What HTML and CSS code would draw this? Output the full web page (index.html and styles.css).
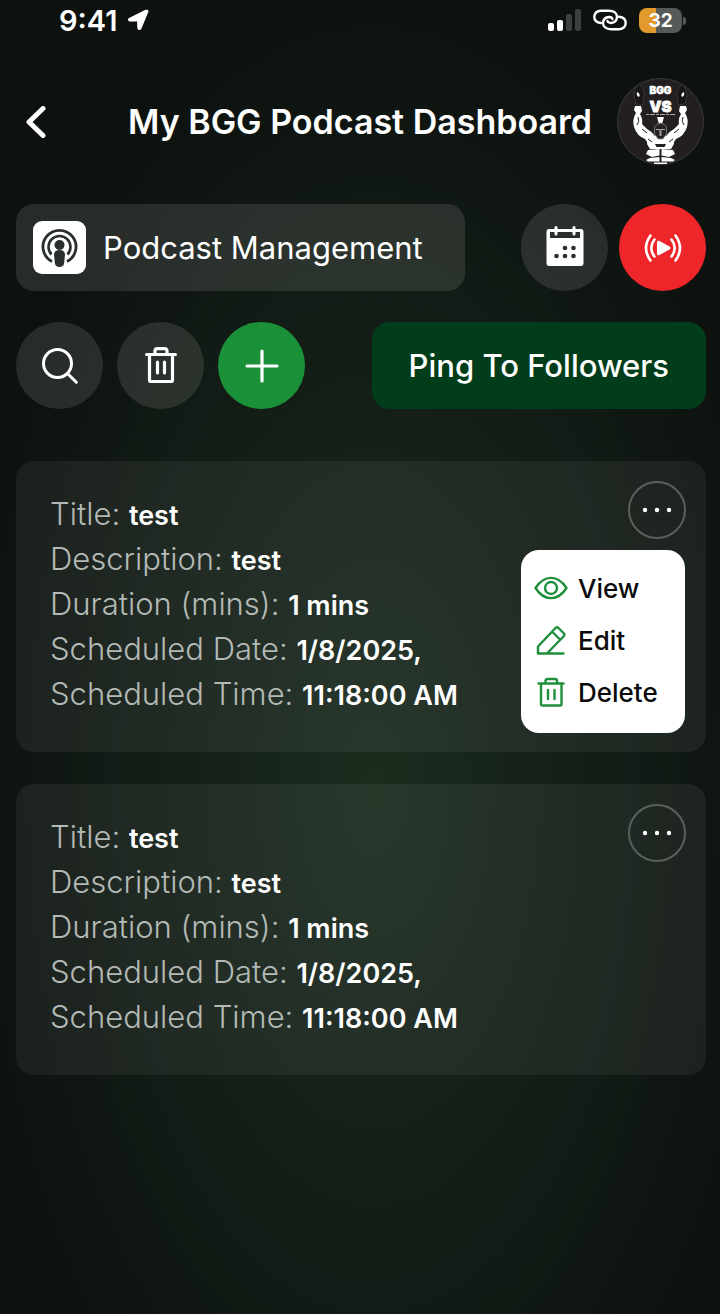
FILE: index.html
```html
<!DOCTYPE html>
<html lang="en">
<head>
  <meta charset="UTF-8">
  <meta name="viewport" content="width=device-width, initial-scale=1.0">
  <title>My BGG Podcast Dashboard</title>
  <link rel="stylesheet" href="styles.css">
</head>
<body>
  <div class="status-bar">
    <div class="status-left">
      <span class="time">9:41</span>
      <svg width="22" height="22" viewBox="0 0 22 22"><path d="M2 9 18.500.8Q22 0 21.300 3L14.500 19.500Q13 22 11 20.500Q10 19.500 10.200 12.500H2.500Q-.5 11 2 9Z" fill="#fff"/></svg>
    </div>
    <div class="status-right">
      <svg width="33" height="22" viewBox="0 0 33 22">
        <rect x="0" y="14" width="6" height="8" rx="2" fill="#fff"/>
        <rect x="9" y="11" width="6" height="11" rx="2" fill="#fff"/>
        <rect x="18" y="5" width="6" height="17" rx="2" fill="#3d413e"/>
        <rect x="27" y="0" width="6" height="22" rx="2" fill="#3d413e"/>
      </svg>
      <svg width="34" height="22" viewBox="0 0 34 22" fill="none" stroke="#fff" stroke-width="2.400" stroke-linecap="round">
        <path d="M8 14C3.500 13.500 1.300 11 1.300 8Q1.500 2 8 1.700H16C21 1.700 24 4.500 24 8Q23.600 13.600 18 14Q15 13.800 14.500 12"/>
        <path d="M26 7.800C30.500 8.300 32.700 11 32.700 14Q32.500 19.800 26 20.200H18C13 20.200 10 17.500 10 14Q10.400 8.400 16 8Q19 8.100 19.500 10"/>
      </svg>
      <div class="battery"><span>32</span></div>
    </div>
  </div>

  <div class="container">
    <header class="header">
      <a class="back" href="#" aria-label="Back">
        <svg width="20" height="32" viewBox="0 0 20 32"><path d="M17 2.500 3 16 17 29.500" fill="none" stroke="#fff" stroke-width="5" stroke-linecap="round" stroke-linejoin="round"/></svg>
      </a>
      <h1>My BGG Podcast Dashboard</h1>
      <a class="avatar" href="#" aria-label="Profile">
        <svg width="87" height="87" viewBox="0 0 87 87">
          <circle cx="43.500" cy="43.500" r="43" fill="#231f20" stroke="#3b3b3b"/>
          <text class="logo-bgg" x="43.500" y="16" text-anchor="middle">BGG</text>
          <text class="logo-vs" x="43.500" y="34" text-anchor="middle">VS</text>
          <!-- dumbbells -->
          <g fill="#191617" stroke="#4a4747" stroke-width=".6">
            <path d="M22 6Q27 10 27 17L26 27 19 26 17 18Q17 10 22 6Z"/>
            <path d="M65 6Q60 10 60 17L61 27 68 26 70 18Q70 10 65 6Z"/>
          </g>
          <path d="M20 14q4 2 2 5-3-1-2-5ZM67 14q-4 2-2 5 3-1 2-5Z" fill="#fff"/>
          <path d="M29 36.500H58" stroke="#aaa" stroke-dasharray="3 1 5 1"/>
          <!-- arms -->
          <path d="M18 28 24 28 25 33 23 36Q26 41 25 46L30 51Q34 53 37 57V67H32L28 61Q20 58 17 49Q15 41 19 35L17 32Z" fill="#fff"/>
          <path d="M69 28 63 28 62 33 64 36Q61 41 62 46L57 51Q53 53 50 57V67H55L59 61Q67 58 70 49Q72 41 68 35L70 32Z" fill="#fff"/>
          <!-- chest and abs -->
          <path d="M31 59Q37 55 43.500 60Q50 55 56 59L57 66 54 71H33L30 66Z" fill="#fff"/>
          <path d="M31 72 42.500 71V77.500L35 79 29 76ZM56 72 44.500 71V77.500L52 79 58 76ZM33 80 42.500 79V83.500H31L29 82ZM54 80 44.500 79V83.500H56L58 82ZM37 84.500H50V86H37Z" fill="#fff"/>
          <!-- helmet -->
          <path d="M40 39H47L45 46H42Z" fill="#fff"/>
          <path d="M37.500 49Q43.500 41 49.500 49V56L46 61H41L37.500 56Z" fill="#262223" stroke="#999" stroke-width=".7"/>
          <path d="M39 51.500H43V58M48 51.500H44V58" fill="none" stroke="#ccc" stroke-width=".8"/>
          <path d="M21 39q2 5-1 8M25 51l5 4M66 39q-2 5 1 8M62 51l-5 4M31 61l4 3M56 61l-4 3" fill="none" stroke="#231f20"/>
          <path d="M38 66H49L47.500 69H39.500Z" fill="#231f20"/>
        </svg>
      </a>
    </header>

    <div class="row">
      <div class="management">
        <svg width="53" height="53" viewBox="0 0 53 53">
          <rect width="53" height="53" rx="9" fill="#fff"/>
          <g fill="none" stroke="#29302b" stroke-width="2.800">
            <path d="M19 40.500A16.500 16.500 0 1 1 34 40.500"/>
            <path d="M18.500 33.500A11 11 0 1 1 34.500 33.500" stroke-width="2.600"/>
          </g>
          <circle cx="26.500" cy="24" r="5" fill="#29302b"/>
          <path d="M26.500 29Q32 29 32 34L31 43Q30 46 26.500 46T22 43L21 34Q21 29 26.500 29Z" fill="#29302b"/>
        </svg>
        <span>Podcast Management</span>
      </div>
      <div class="actions">
        <button class="round" aria-label="Calendar">
          <svg width="38" height="44" viewBox="0 0 38 44">
            <path d="M3 3H35Q37.500 3 37.500 6V37Q37.500 40 35 40H3Q.5 40 .5 37V6Q.5 3 3 3Z" fill="#fff"/>
            <path d="M4 6H34V12H4Z" fill="#29302b"/>
            <path d="M10 1.500V8M28 1.500V8" stroke="#fff" stroke-width="3" stroke-linecap="round"/>
            <g fill="#29302b"><circle cx="19" cy="22" r="2.300"/><circle cx="27.500" cy="22" r="2.300"/><circle cx="10.500" cy="30" r="2.300"/><circle cx="19" cy="30" r="2.300"/><circle cx="27.500" cy="30" r="2.300"/></g>
          </svg>
        </button>
        <button class="round live" aria-label="Go live">
          <svg width="38" height="28" viewBox="0 0 38 28">
            <path d="M13 8.500Q13 6 15.500 7L25.500 12.500Q27.500 14 25.500 15.500L15.500 21Q13 22 13 19.500Z" fill="#fff"/>
            <path d="M6.500 1.500Q-2.500 14 6.500 26.500M10.500 5.500Q4 14 10.500 22.500M31.500 1.500Q40.500 14 31.500 26.500M27.500 5.500Q34 14 27.500 22.500" fill="none" stroke="#fff" stroke-width="2.600" stroke-linecap="round"/>
          </svg>
        </button>
      </div>
    </div>

    <div class="row">
      <div class="tools">
        <button class="round" aria-label="Search">
          <svg width="36" height="36" viewBox="0 0 36 36" fill="none" stroke="#fff" stroke-width="3" stroke-linecap="round"><circle cx="15.500" cy="15.500" r="14"/><path d="M26 26 34.300 34.300"/></svg>
        </button>
        <button class="round" aria-label="Delete">
          <svg width="32" height="38" viewBox="0 0 32 38" fill="none" stroke="#fff" stroke-width="3.200" stroke-linecap="round" stroke-linejoin="round"><path d="M1.600 7.500H30.400M4.500 8V33Q4.500 34.500 6 34.500H26Q27.500 34.500 27.500 33V8M10 7V4Q10 1.600 12.500 1.600H19.500Q22 1.600 22 4V7M12.500 15V26M19.500 15V26"/></svg>
        </button>
        <button class="round add" aria-label="Add">
          <svg width="34" height="34" viewBox="0 0 34 34"><path d="M17 2V32M2 17H32" stroke="#fff" stroke-width="3.200" stroke-linecap="round"/></svg>
        </button>
      </div>
      <button class="ping">Ping To Followers</button>
    </div>

    <div class="list">
      <div class="card">
        <div class="details">
          <p>Title: <b>test</b></p>
          <p>Description: <b>test</b></p>
          <p>Duration (mins): <b>1 mins</b></p>
          <p>Scheduled Date: <b>1/8/2025,</b></p>
          <p>Scheduled Time: <b>11:18:00 AM</b></p>
        </div>
        <button class="more" aria-label="More">
          <svg width="30" height="6" viewBox="0 0 30 6" fill="#fff"><circle cx="3" cy="3" r="2.200"/><circle cx="15" cy="3" r="2.200"/><circle cx="27" cy="3" r="2.200"/></svg>
        </button>
        <div class="menu">
          <button>
            <svg width="34" height="32" viewBox="0 0 34 32"><path d="M1.500 16C10 2.500 24 2.500 32.500 16C24 29.500 10 29.500 1.500 16Z"/><circle cx="17" cy="16" r="6"/></svg>
            View
          </button>
          <button>
            <svg width="34" height="32" viewBox="0 0 34 32"><path d="M4 29.500V22.500L21.500 4Q23 2.500 24.500 4L30 9.500Q31 11 30 12L13 29.500H5.500Q4 29.500 4 28M13 29.500H29.500M18.500 8 26 15.500"/></svg>
            Edit
          </button>
          <button>
            <svg width="34" height="32" viewBox="0 0 34 32"><path d="M4.500 7.500H29.500M7 8V28Q7 29.500 8.500 29.500H26Q27.500 29.500 27.500 28V8M11.500 7V5Q11.500 3 13.500 3H21Q23 3 23 5V7M14 14V23M20.500 14V23"/></svg>
            Delete
          </button>
        </div>
      </div>

      <div class="card">
        <div class="details">
          <p>Title: <b>test</b></p>
          <p>Description: <b>test</b></p>
          <p>Duration (mins): <b>1 mins</b></p>
          <p>Scheduled Date: <b>1/8/2025,</b></p>
          <p>Scheduled Time: <b>11:18:00 AM</b></p>
        </div>
        <button class="more" aria-label="More">
          <svg width="30" height="6" viewBox="0 0 30 6" fill="#fff"><circle cx="3" cy="3" r="2.200"/><circle cx="15" cy="3" r="2.200"/><circle cx="27" cy="3" r="2.200"/></svg>
        </button>
      </div>
    </div>
  </div>
</body>
</html>
```
FILE: styles.css
```css
*{
  margin: 0;
  padding: 0;
  box-sizing: border-box;
}
body{
  min-height: 100vh;
  color: #fff;
  font-family: Inter, "Liberation Sans", sans-serif;
  background: #0d120f radial-gradient(ellipse 56% 60% at 52% 60%, #1b2d1f 0%, #16221a 35%, #121b15 65%, #0d120f 100%) no-repeat;
}
button{
  border: none;
  font-family: inherit;
  color: inherit;
  cursor: pointer;
}
svg{
  display: block;
  flex-shrink: 0;
}

/* status bar */
.status-bar{
  display: flex;
  justify-content: space-between;
  align-items: center;
  height: 40px;
  padding: 0 38px 0 59px;
}
.status-left{
  display: flex;
  align-items: center;
  gap: 10px;
}
.time{
  font-size: 29px;
  font-weight: 600;
}
.status-right{
  display: flex;
  align-items: center;
  gap: 12px;
}
.battery{
  position: relative;
  width: 43px;
  height: 25px;
  border-radius: 8px;
  background: linear-gradient(90deg, #e39a2d 40%, #555957 40%);
  text-align: center;
  font-size: 19px;
  font-weight: 700;
  line-height: 25px;
}
.battery::after{
  content: "";
  position: absolute;
  right: -4px;
  top: 9px;
  width: 3px;
  height: 8px;
  border-radius: 0 3px 3px 0;
  background: #555957;
}

.container{
  padding: 38px 14px 40px 16px;
}
.header{
  display: grid;
  grid-template-columns: 87px 1fr 87px;
  align-items: center;
  margin-bottom: 39px;
  padding-right: 2px;
}
.header h1{
  font-size: 34px;
  font-weight: 600;
  line-height: 40px;
  text-align: center;
  white-space: nowrap;
}
.back{
  padding-left: 10px;
}
.logo-bgg{
  fill: #fff;
  stroke: #fff;
  stroke-width: .5;
  font-size: 10px;
  font-weight: 900;
}
.logo-vs{
  fill: #fff;
  stroke: #fff;
  stroke-width: .8;
  font-size: 15px;
  font-weight: 900;
}

.row{
  display: flex;
  justify-content: space-between;
  align-items: center;
  margin-bottom: 31px;
}
.management{
  display: flex;
  align-items: center;
  gap: 17px;
  width: 65%;
  height: 87px;
  padding: 0 17px;
  border-radius: 18px;
  background: rgba(255, 255, 255, .11);
  font-size: 31px;
  white-space: nowrap;
}
.actions{
  display: flex;
  gap: 11px;
}
.tools{
  display: flex;
  gap: 14px;
}
.round{
  display: flex;
  justify-content: center;
  align-items: center;
  width: 87px;
  height: 87px;
  border-radius: 50%;
  background: rgba(255, 255, 255, .11);
}
.live{
  background: #ee262a;
}
.add{
  background: #1a9038;
}
.ping{
  height: 87px;
  padding: 0 37px;
  border-radius: 18px;
  background: #023d1b;
  font-size: 31px;
  font-weight: 500;
}

/* podcast list */
.list{
  display: grid;
  gap: 32px;
  margin-top: 52px;
}
.card{
  position: relative;
  display: flex;
  justify-content: space-between;
  align-items: flex-start;
  padding: 20px 20px 26px 34px;
  border-radius: 18px;
  background: rgba(255, 255, 255, .06);
}
.details{
  padding: 10px 0;
}
.details p{
  color: #b3b9b5;
  font-size: 31px;
  font-weight: 300;
  line-height: 45px;
}
.details b{
  color: #fff;
  font-size: 27px;
  font-weight: 600;
  line-height: 27px;
}
.more{
  display: flex;
  justify-content: center;
  align-items: center;
  width: 58px;
  height: 58px;
  border: 2px solid #59605b;
  border-radius: 50%;
  background: none;
}
.menu{
  position: absolute;
  top: 89px;
  right: 21px;
  width: 164px;
  padding: 12px 13px 15px;
  border-radius: 18px;
  background: #fff;
}
.menu button{
  display: flex;
  align-items: center;
  gap: 10px;
  width: 100%;
  height: 52px;
  background: none;
  color: #0a0a0a;
  font-size: 26px;
  font-weight: 500;
}
.menu svg{
  fill: none;
  stroke: #1f8f3c;
  stroke-width: 2.4;
  stroke-linecap: round;
  stroke-linejoin: round;
}
```
